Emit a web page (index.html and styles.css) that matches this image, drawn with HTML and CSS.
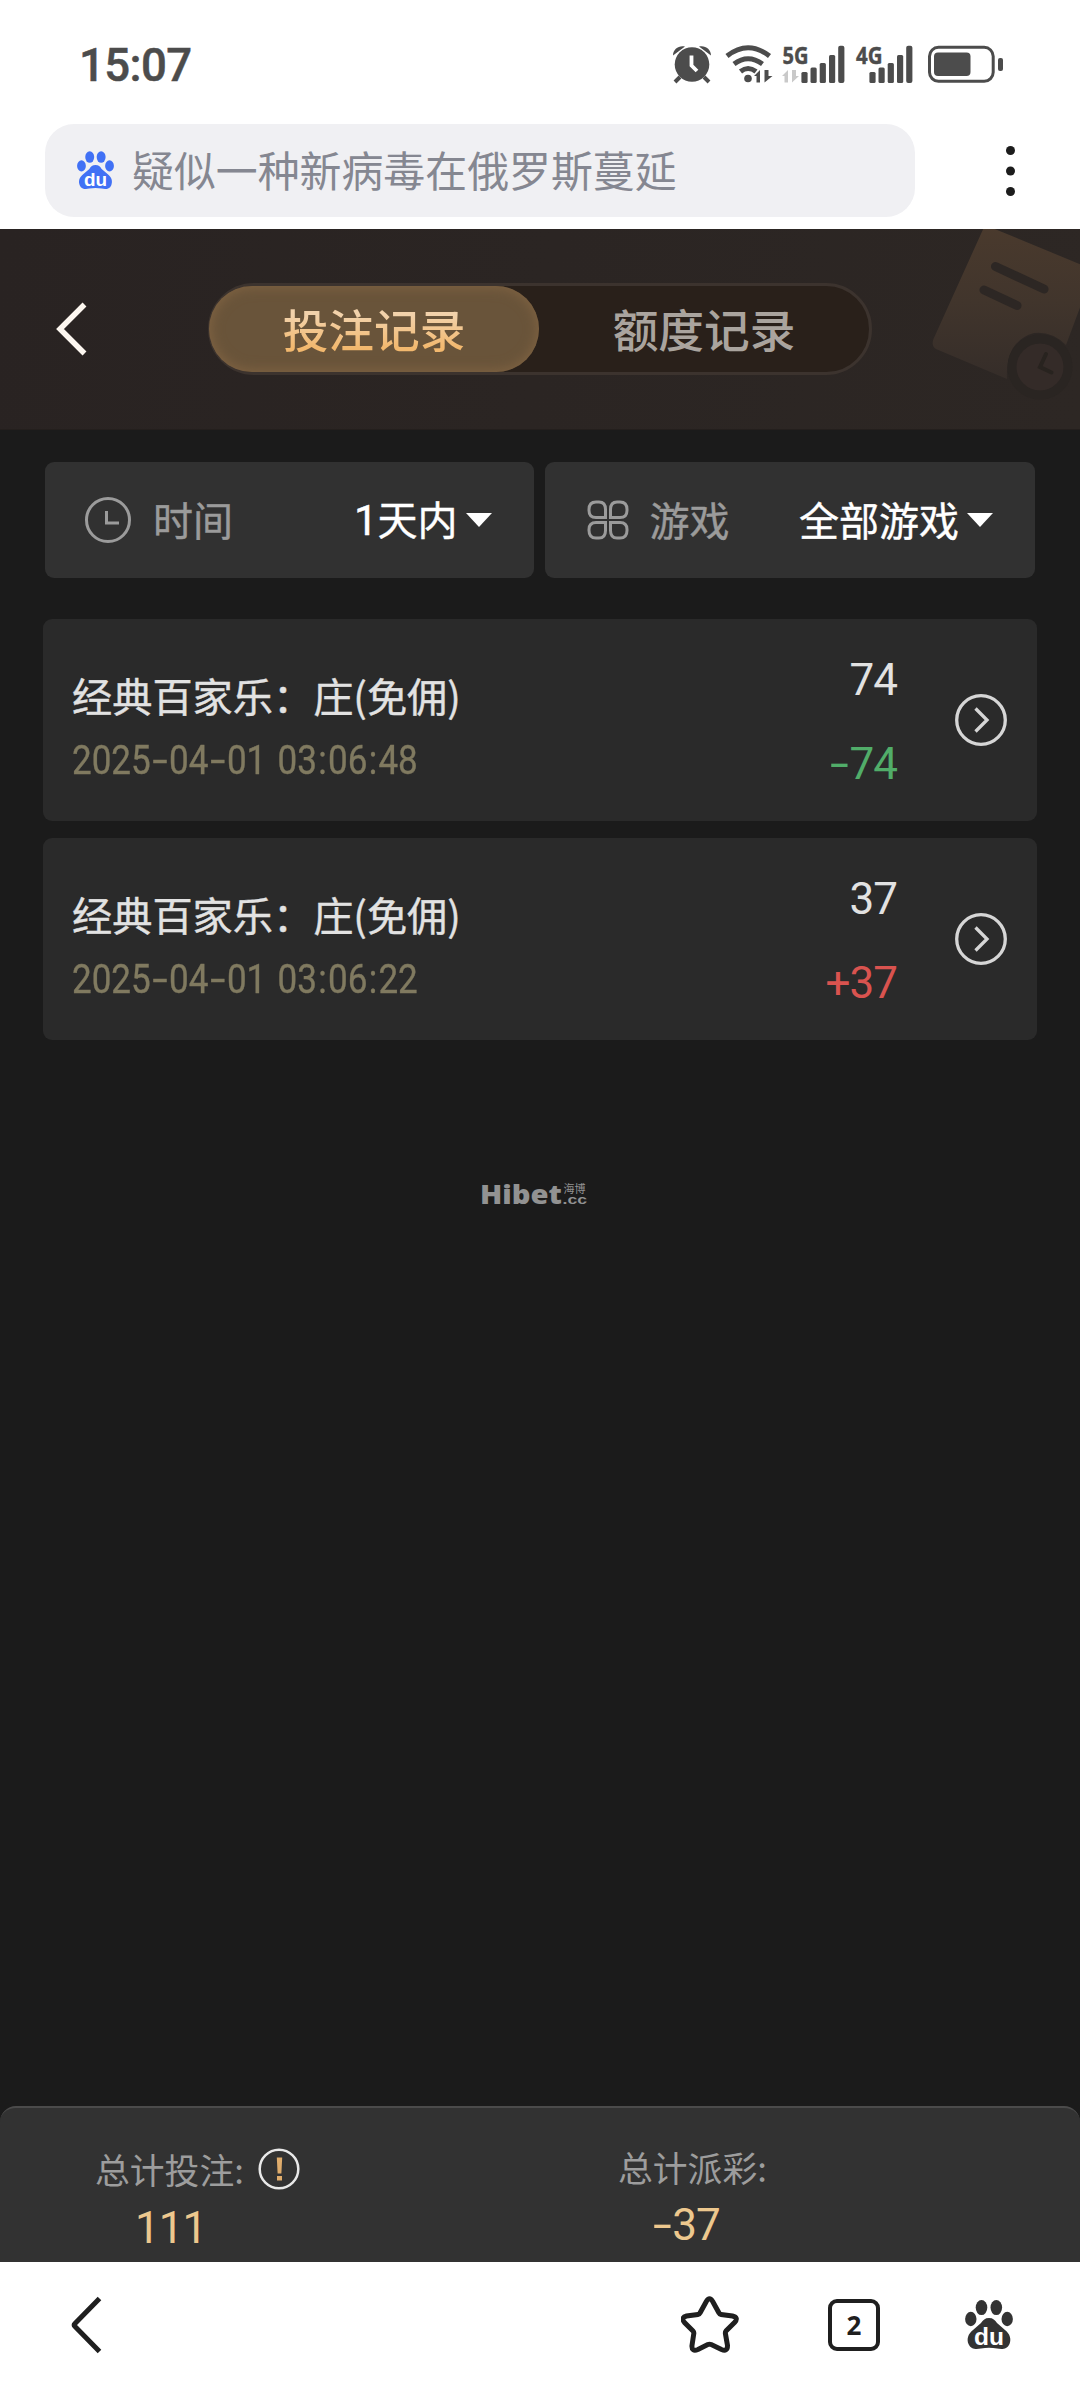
FILE: index.html
```html
<!DOCTYPE html>
<html lang="zh-CN">
<head>
<meta charset="utf-8">
<title>投注记录</title>
<link rel="stylesheet" href="styles.css">
</head>
<body>
<header class="status">
  <time>15:07</time>
  <svg class="status-icons" width="332" height="80" viewBox="672 25 332 80">
    <g fill="#4c4c4c">
      <circle cx="692" cy="64.500" r="17.300"/>
      <path d="M673 55.500C673 49 679 45 685 46.500ZM711 55.500C711 49 705 45 699 46.500Z"/>
      <path d="M680 77l-5 5M704 77l5 5" stroke="#4c4c4c" stroke-width="4"/>
      <path d="M691.500 55.500v10l5.500 5.500" fill="none" stroke="#fff" stroke-width="3.800"/>
      <g fill="none" stroke="#4c4c4c" stroke-width="5">
        <path d="M727 56Q748 39.500 769.500 56"/>
        <path d="M734 64Q748 53.500 762.500 64"/>
        <path d="M740.500 71.500Q748 65.500 756 71.500"/>
      </g>
      <circle cx="748" cy="78.500" r="3.800"/>
      <path d="M754 76l6-6v12.500h-3.500V76zM764.500 70v12.500l8-6.500h-4v-6z"/>
      <text x="782.500" y="63.800" class="net" textLength="26" lengthAdjust="spacingAndGlyphs">5G</text>
      <path d="M782 76l6-6v12.500h-3.500V76zM792 70v12.500l7-6.500h-3v-6z" fill="#c9c9c9"/>
      <g id="bars">
        <rect x="801.400" y="72" width="6.200" height="11" rx="1.500"/>
        <rect x="810.500" y="67.500" width="6.200" height="15.500" rx="1.500"/>
        <rect x="819.700" y="63" width="6.200" height="20" rx="1.500"/>
        <rect x="829" y="55" width="6.200" height="28" rx="1.500"/>
        <rect x="838.200" y="45.700" width="6.200" height="37.300" rx="2"/>
      </g>
      <use href="#bars" x="68"/>
      <text x="856" y="63.800" class="net" textLength="26.500" lengthAdjust="spacingAndGlyphs">4G</text>
      <rect x="929.500" y="47.300" width="63.700" height="34" rx="9" fill="none" stroke="#4c4c4c" stroke-width="3"/>
      <rect x="934" y="52.500" width="36.500" height="23.500" rx="4"/>
      <rect x="998" y="58" width="5" height="13" rx="2"/>
    </g>
  </svg>
</header>

<div class="address">
  <div class="search">
    <svg class="paw blue" width="37" height="39" viewBox="0 0 48 50">
      <ellipse cx="16.500" cy="7.600" rx="5.800" ry="7.500"/>
      <ellipse cx="31.300" cy="7.600" rx="5.800" ry="7.500"/>
      <ellipse cx="5.800" cy="19" rx="5.700" ry="7.200"/>
      <ellipse cx="42.200" cy="19" rx="5.700" ry="7.200"/>
      <path d="M24 18C20 18 18 20 16 23L8 30C3 34 1.500 39 3.500 44C6 50 12 49.300 16 48.500C21 47.500 27 47.500 32 48.500C36 49.300 42 50 44.500 44C46.500 39 45 34 40 30L32 23C30 20 28 18 24 18Z"/>
      <text x="9" y="44.500" class="paw-text" textLength="30" lengthAdjust="spacingAndGlyphs">du</text>
    </svg>
    <span>疑似一种新病毒在俄罗斯蔓延</span>
  </div>
  <svg class="more" width="9" height="50" viewBox="0 0 9 50"><circle cx="4.500" cy="4.500" r="4.500"/><circle cx="4.500" cy="25" r="4.500"/><circle cx="4.500" cy="45.500" r="4.500"/></svg>
</div>

<main class="app">
  <div class="top">
    <svg class="top-back" width="32" height="56" viewBox="0 0 32 56"><path d="M28.500 3.500L4 28L28.500 52.500"/></svg>
    <nav class="tabs">
      <a class="tab active"><span>投注记录</span></a>
      <a class="tab">额度记录</a>
    </nav>
    <svg class="top-art" width="150" height="200" viewBox="930 229 150 200">
      <defs><linearGradient id="paper" x1="0" y1="0" x2="0" y2="1"><stop offset="0" stop-color="#4a3a2d"/><stop offset=".5" stop-color="#41352c"/><stop offset="1" stop-color="#352d29"/></linearGradient></defs>
      <path d="M985 225L1094 270L1066 345Q1052 331 1034 333Q1005 341 1007 379L936 349Q931 346 933.500 339Z" fill="url(#paper)"/>
      <path d="M995.500 266.500L1044 289M984 290L1017 305.500" stroke="#2d2724" stroke-width="9" stroke-linecap="round"/>
      <circle cx="1040" cy="367" r="28" fill="#342b28" stroke="#2a2522" stroke-width="9"/>
      <path d="M1046 354L1040 367L1051.500 372.500" fill="none" stroke="#28231f" stroke-width="4" stroke-linecap="round"/>
    </svg>
  </div>

  <div class="filters">
    <div class="filter">
      <svg class="line" width="46" height="46" viewBox="0 0 46 46"><circle cx="23" cy="23" r="21.500"/><path d="M21.500 14v12H34"/></svg>
      <span class="name time-name">时间</span>
      <span class="value"><span class="num">1</span>天内</span><i class="caret"></i>
    </div>
    <div class="filter game">
      <svg class="line" width="42" height="40" viewBox="0 0 42 40"><path d="M18.500 17.500H9Q2 17.500 2 10.500V9.500Q2 2 9 2H12Q18.500 2 18.500 9.500ZM23.500 17.500H33Q40 17.500 40 10.500V9.500Q40 2 33 2H30Q23.500 2 23.500 9.500ZM18.500 22.500H9Q2 22.500 2 29.500V30.500Q2 38 9 38H12Q18.500 38 18.500 30.500ZM23.500 22.500H33Q40 22.500 40 29.500V30.500Q40 38 33 38H30Q23.500 38 23.500 30.500Z"/></svg>
      <span class="name">游戏</span>
      <span class="value">全部游戏</span><i class="caret"></i>
    </div>
  </div>

  <section class="records">
    <article class="record">
      <div class="info">
        <h2>经典百家乐：庄(免佣)</h2>
        <p>2025<b>-</b>04<b>-</b>01 03<s>:</s>06<s>:</s>48</p>
      </div>
      <div class="amounts"><span>74</span><span class="loss"><b>-</b>74</span></div>
      <svg class="go" width="52" height="52" viewBox="0 0 52 52"><circle cx="26" cy="26" r="24.300"/><path d="M20.500 14.500L32 26L20.500 37.500"/></svg>
    </article>
    <article class="record">
      <div class="info">
        <h2>经典百家乐：庄(免佣)</h2>
        <p>2025<b>-</b>04<b>-</b>01 03<s>:</s>06<s>:</s>22</p>
      </div>
      <div class="amounts"><span>37</span><span class="win">+37</span></div>
      <svg class="go" width="52" height="52" viewBox="0 0 52 52"><circle cx="26" cy="26" r="24.300"/><path d="M20.500 14.500L32 26L20.500 37.500"/></svg>
    </article>
  </section>

  <svg class="brand" width="110" height="40" viewBox="480 1174 110 40">
    <text x="480" y="1204" class="brand-name" textLength="82" lengthAdjust="spacingAndGlyphs">Hibet</text>
    <text x="563.500" y="1193" class="brand-cn">海博</text>
    <text x="562.500" y="1204" class="brand-cc" textLength="24.500" lengthAdjust="spacingAndGlyphs">.cc</text>
  </svg>

  <footer class="totals">
    <div class="total bet">
      <div class="label">总计投注:
        <svg width="42" height="42" viewBox="0 0 42 42"><circle cx="21" cy="21" r="19.300"/><path d="M18.800 9.500h5.400l-.8 16h-3.800zM19 28h5v4.500h-5z"/></svg>
      </div>
      <div class="sum">111</div>
    </div>
    <div class="total pay">
      <div class="label">总计派彩:</div>
      <div class="sum"><b>-</b>37</div>
    </div>
  </footer>
</main>

<nav class="bottom">
  <svg class="nav-back" width="32" height="58" viewBox="0 0 32 58"><path d="M28.500 2.500L4 27.500Q2.500 29 4 30.500L28.500 55.500"/></svg>
  <svg class="star" width="58" height="58" viewBox="0 0 58 58"><path d="M25.300 5.500Q28.500 0 31.700 5.500L38 17Q38.600 18.300 40 18.500L51.500 20Q58 21.500 53.500 26.500L45 35Q44.200 36 44.400 37.500L46.500 49.500Q46.500 56 40.500 53.500L30.200 48.500Q28.500 47.800 26.800 48.500L17 53.500Q10.500 56 11 49.500L12.800 37.500Q13 36 12 35L3.500 26.500Q-.5 21.500 5.500 20L17 18.500Q18.400 18.300 19 17Z"/></svg>
  <span class="pages">2</span>
  <svg class="paw dark" width="48" height="50" viewBox="0 0 48 50">
    <ellipse cx="16.500" cy="7.600" rx="5.800" ry="7.500"/>
    <ellipse cx="31.300" cy="7.600" rx="5.800" ry="7.500"/>
    <ellipse cx="5.800" cy="19" rx="5.700" ry="7.200"/>
    <ellipse cx="42.200" cy="19" rx="5.700" ry="7.200"/>
    <path d="M24 18C20 18 18 20 16 23L8 30C3 34 1.500 39 3.500 44C6 50 12 49.300 16 48.500C21 47.500 27 47.500 32 48.500C36 49.300 42 50 44.500 44C46.500 39 45 34 40 30L32 23C30 20 28 18 24 18Z"/>
    <text x="9" y="44.500" class="paw-text" textLength="30" lengthAdjust="spacingAndGlyphs">du</text>
  </svg>
</nav>
</body>
</html>
```

FILE: styles.css
```css
* { box-sizing: border-box; }

body {
  margin: 0;
  width: 1080px;
  height: 2388px;
  display: flex;
  flex-direction: column;
  background: #fff;
  font-family: "Noto Sans CJK SC", sans-serif;
  overflow: hidden;
}

svg { display: block; flex: none; }

/* browser chrome */
.status {
  height: 124px;
  padding: 5px 76px 0 79px;
  display: flex;
  align-items: center;
  justify-content: space-between;
}
.status time {
  font-family: Roboto, sans-serif;
  font-size: 45.500px;
  font-weight: 500;
  line-height: 60px;
  padding-top: 2px;
  color: #4c4c4c;
  letter-spacing: -.6px;
  -webkit-text-stroke: .5px;
}
.net { font: 700 24px "Open Sans", sans-serif; stroke: #4c4c4c; stroke-width: .4px; }

.address {
  height: 105px;
  padding: 0 64px 12px 45px;
  display: flex;
  align-items: center;
  justify-content: space-between;
}
.search {
  width: 870px;
  height: 93px;
  padding-left: 32px;
  border-radius: 29px;
  background: #f0f0f3;
  display: flex;
  align-items: center;
  gap: 18px;
  font-size: 41.900px;
  line-height: 60px;
  color: #858791;
}
.search span { padding-bottom: 4px; }
.more { fill: #1c1c1c; margin-right: 1px; }
.paw-text { font: 700 24px "Liberation Sans", sans-serif; fill: #fff; }
.blue { fill: #4171f5; }
.dark { fill: #333; }

/* page */
.app {
  height: 2033px;
  display: flex;
  flex-direction: column;
  background: #1b1b1b;
}
.top {
  height: 201px;
  display: flex;
  align-items: center;
  background: linear-gradient(100deg, #292322, #2d2724);
  border-bottom: 1px solid #241f1d;
}
.top-back {
  margin: 0 120px 0 56px;
  fill: none;
  stroke: #fdf7f0;
  stroke-width: 5.500px;
}
.tabs {
  width: 664px;
  height: 92px;
  border: 3px solid #3c332e;
  border-radius: 46px;
  background: #29201a;
  display: flex;
}
.tab {
  flex: 1;
  display: flex;
  align-items: center;
  justify-content: center;
  padding-bottom: 3px;
  font-size: 45.700px;
  font-weight: 500;
  line-height: 66px;
  color: #aaa49e;
}
.tab.active {
  margin-left: -2px;
  border-radius: 44px;
  background: #69543a;
  box-shadow: inset 0 0 14px #856644;
}
.tab.active span {
  background: linear-gradient(#f2d2ab 30%, #f2b86e 80%);
  -webkit-background-clip: text;
  background-clip: text;
  color: transparent;
}
.top-art { margin-left: auto; }

.filters {
  padding: 32px 45px 0;
  display: flex;
  gap: 11px;
}
.filter {
  flex: 1;
  height: 116px;
  padding: 0 42px 0 40px;
  border-radius: 9px;
  background: #313131;
  display: flex;
  align-items: center;
  font-size: 40px;
  line-height: 58px;
  -webkit-text-stroke: .4px;
}
.filter.game { padding-left: 42px; }
.line { fill: none; stroke: #9b9b9b; stroke-width: 3px; }
.name { margin-left: 21px; padding-bottom: 2px; color: #9b9b9b; }
.time-name { margin-left: 22px; }
.value { margin-left: auto; padding-bottom: 2px; color: #fff; }
.num { font-family: Roboto, sans-serif; font-size: 42px; }
.caret {
  margin: 0 0 0 8px;
  border: solid transparent;
  border-width: 14px 13px 0;
  border-top-color: #fff;
}

.records {
  padding: 41px 43px 0;
  display: flex;
  flex-direction: column;
  gap: 17px;
}
.record {
  height: 202px;
  padding: 0 29px;
  border-radius: 9px;
  background: #2a2a2a;
  display: flex;
  align-items: center;
}
.info { padding-top: 17px; width: 420px; }
.info h2 {
  margin: 0;
  font-size: 40.200px;
  font-weight: 400;
  line-height: 64px;
  color: #e2e2e2;
  -webkit-text-stroke: .4px;
}
.info p {
  margin: 0;
  font-family: Roboto, sans-serif;
  font-size: 40px;
  line-height: 68px;
  white-space: nowrap;
  word-spacing: 3px;
  color: #807a60;
  transform: scaleX(.875);
  transform-origin: left;
  -webkit-text-stroke: .4px;
}
b, s {
  display: inline-block;
  font-weight: 400;
  text-decoration: none;
}
b { transform: scaleX(1.550); margin: 0 5px; }
s { margin: 0 1.500px; }
.amounts {
  margin-left: auto;
  padding-top: 4px;
  width: 120px;
  display: flex;
  flex-direction: column;
  align-items: flex-end;
  font-family: Roboto, sans-serif;
  font-size: 44px;
  line-height: 84px;
  letter-spacing: -1px;
  color: #e2e2e2;
}
.loss { color: #51ad69; }
.win { color: #d9534f; }
.go { margin-left: 58px; margin-right: 1px; fill: none; stroke: #d6d6d6; stroke-width: 3.300px; }

.brand { margin: 134px 0 0 480px; fill: #929292; }
.brand-name { font: 800 26px "Open Sans", sans-serif; }
.brand-cn { font-size: 11px; }
.brand-cc { font: 700 13px "Liberation Sans", sans-serif; }

.totals {
  margin-top: auto;
  height: 156px;
  padding-top: 30px;
  border-top: 2px solid #4b4b4b;
  border-radius: 16px 16px 0 0;
  background: #323232;
  display: flex;
}
.total { width: 200px; display: flex; flex-direction: column; }
.bet { margin-left: 95px; }
.pay { margin-left: 323px; }
.label {
  height: 62px;
  display: flex;
  align-items: center;
  gap: 14px;
  font-size: 34.800px;
  line-height: 50px;
  white-space: nowrap;
  color: #9d9d9d;
}
.label circle { fill: none; stroke: #e8e8e8; stroke-width: 2.500px; }
.label path { fill: #dfac6c; }
.sum {
  font-family: Roboto, sans-serif;
  font-size: 44px;
  line-height: 56px;
  letter-spacing: -1px;
  color: #edc88e;
  padding-left: 40px;
}
.pay .label { margin-top: -2px; }
.pay .sum { padding-left: 33px; margin-top: -1px; }

.bottom {
  height: 126px;
  padding: 0 67px 1px 71px;
  display: flex;
  align-items: center;
}
.nav-back { fill: none; stroke: #1f1f1f; stroke-width: 5px; }
.star { margin-left: 578px; fill: none; stroke: #1f1f1f; stroke-width: 5px; }
.pages {
  width: 52px;
  height: 52px;
  margin: 0 85px 0 89px;
  border: 4.500px solid #1f1f1f;
  border-radius: 9px;
  display: flex;
  align-items: center;
  justify-content: center;
  font: 700 26px/40px "Open Sans", sans-serif;
  color: #1f1f1f;
}
```
